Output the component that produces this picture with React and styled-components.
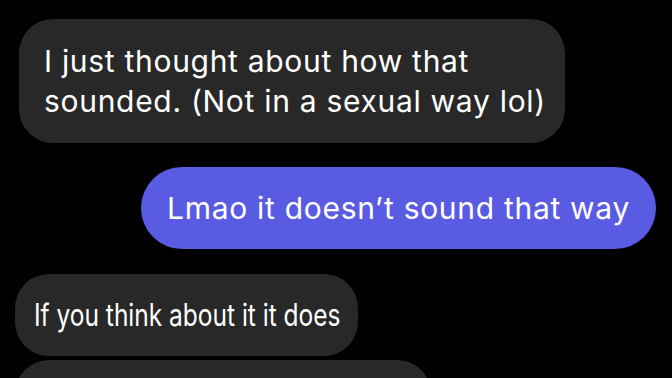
import React from 'react'
import styled, { createGlobalStyle } from 'styled-components'

const GlobalStyle = createGlobalStyle`
    html, body {
        margin: 0;
        padding: 0;
        background: #000;
    }
`

const Thread = styled.div`
    width: 672px;
    height: 378px;
    overflow: hidden;
    background: #000;
    display: flex;
    flex-direction: column;
    padding-top: 19px;
    box-sizing: border-box;
    font-family: Inter, "Liberation Sans", sans-serif;
`

const Row = styled.div`
    display: flex;
    justify-content: ${props => props.mine ? 'flex-end' : 'flex-start'};
    padding: 0 ${props => props.mine ? '16px' : '0'} 0 ${props => props.mine ? '0' : props.inset}px;
    margin-bottom: ${props => props.gap}px;
`

const Bubble = styled.div`
    background: ${props => props.mine ? '#5a5be3' : '#282828'};
    color: #fff;
    border-radius: ${props => props.mine ? 41 : 34}px;
    font-size: 30px;
    line-height: 40px;
    letter-spacing: 0.7px;
    padding: ${props => props.pad};
    width: ${props => props.w ? props.w + 'px' : 'auto'};
    min-height: 82px;
    box-sizing: border-box;
    white-space: nowrap;
`

// third bubble's screenshot was squeezed sideways
const Squeezed = styled.span`
    display: inline-block;
    font-size: 31px;
    transform: scaleX(${props => props.scale});
    transform-origin: left center;
    letter-spacing: 0;
`

const App = () => {
  return (
    <>
      <GlobalStyle />
      <Thread>
        <Row inset={19} gap={24}>
          <Bubble pad="22px 26px 22px 25px" w={546}>
            I just thought about how that<br />sounded. (Not in a sexual way lol)
          </Bubble>
        </Row>
        <Row mine gap={25}>
          <Bubble mine pad="21px 26px">Lmao it doesn’t sound that way</Bubble>
        </Row>
        <Row inset={15} gap={4}>
          <Bubble pad="21px 19px" w={343}>
            <Squeezed scale={0.79}>If you think about it it does</Squeezed>
          </Bubble>
        </Row>
        <Row inset={15} gap={0}>
          <Bubble pad="21px 19px" w={416}>&nbsp;</Bubble>
        </Row>
      </Thread>
    </>
  )
}

export default App
